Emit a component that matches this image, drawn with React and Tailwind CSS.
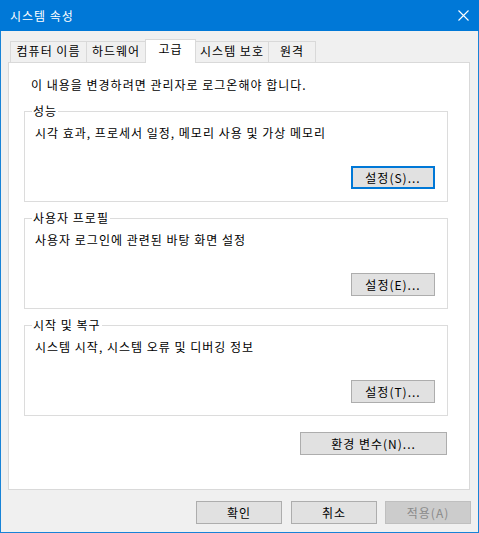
import React from 'react';

const font = { fontFamily: '"Noto Sans CJK KR", "Noto Sans", sans-serif' };

const tabs = [
  { label: '컴퓨터 이름', w: 'w-[77px]' },
  { label: '하드웨어', w: 'w-[60px]' },
  { label: '고급', w: 'w-[51px]', active: true },
  { label: '시스템 보호', w: 'w-[74px]' },
  { label: '원격', w: 'w-[48px]' },
];

const Button = ({ children, className = '', focused, disabled }) => (
  <div
    className={`h-[23px] flex items-center justify-center text-[12px] leading-[16px] ${
      disabled
        ? 'bg-[#cccccc] border border-[#bfbfbf] text-[#8a8a8a]'
        : focused
        ? 'bg-[#e1e1e1] border-2 border-[#0078d7] text-black'
        : 'bg-[#e1e1e1] border border-[#adadad] text-black'
    } ${className}`}
  >
    {children}
  </div>
);

const Group = ({ title, text, button, className = '' }) => (
  <div className={`relative ml-[15px] w-[424px] h-[91px] border border-[#dcdcdc] ${className}`}>
    <span className="absolute -top-[9px] left-[7px] bg-white px-[1px] text-[12px] leading-[16px] text-black">
      {title}
    </span>
    <div className="pt-[13px] pl-[10px] text-[12px] leading-[16px] text-black">{text}</div>
    <div className="flex justify-end mt-[25px] mr-[12px]">
      <Button className="w-[84px]" focused={button.focused}>
        {button.label}
      </Button>
    </div>
  </div>
);

const App = () => {
  return (
    <div className="w-[479px] h-[533px] bg-[#f0f0f0] select-none tracking-[1px]" style={font}>
      <div className="h-[31px] bg-[#0078d7] flex items-center justify-between pl-[10px] pr-[10px]">
        <span className="text-white text-[12px] leading-[16px]">시스템 속성</span>
        <svg width="11" height="11" viewBox="0 0 11 11">
          <path d="M0.5 0.5 L10.5 10.5 M10.5 0.5 L0.5 10.5" stroke="#ffffff" strokeWidth="1.1" />
        </svg>
      </div>

      <div className="h-[502px] border-x border-b border-[#1883d7] flex flex-col">
        <div className="mt-[8px] h-[23px] flex items-end pl-[9px]">
          {tabs.map((t, i) => (
            <div
              key={t.label}
              className={`${t.w} ${i > 0 ? '-ml-px' : ''} text-center text-[12px] leading-[16px] text-black border-t border-x border-[#d9d9d9] ${
                t.active
                  ? 'relative z-10 h-[24px] -mb-px bg-white pt-[1px]'
                  : 'h-[21px] bg-[#f0f0f0] pt-[1px]'
              }`}
            >
              {t.label}
            </div>
          ))}
        </div>

        <div className="ml-[7px] w-[462px] h-[428px] border border-[#d9d9d9] bg-white">
          <div className="mt-[14px] pl-[22px] text-[12px] leading-[16px] text-black">
            이 내용을 변경하려면 관리자로 로그온해야 합니다.
          </div>
          <Group
            className="mt-[18px]"
            title="성능"
            text="시각 효과, 프로세서 일정, 메모리 사용 및 가상 메모리"
            button={{ label: '설정(S)...', focused: true }}
          />
          <Group
            className="mt-[16px]"
            title="사용자 프로필"
            text="사용자 로그인에 관련된 바탕 화면 설정"
            button={{ label: '설정(E)...' }}
          />
          <Group
            className="mt-[16px]"
            title="시작 및 복구"
            text="시스템 시작, 시스템 오류 및 디버깅 정보"
            button={{ label: '설정(T)...' }}
          />
          <div className="flex justify-end mt-[16px] mr-[22px]">
            <Button className="w-[147px]">환경 변수(N)...</Button>
          </div>
        </div>

        <div className="mt-[11px] flex justify-end pr-[7px]">
          <Button className="w-[86px]">확인</Button>
          <Button className="w-[86px] ml-[9px]">취소</Button>
          <Button className="w-[86px] ml-[8px]" disabled>
            적용(A)
          </Button>
        </div>
      </div>
    </div>
  );
};

export default App;
